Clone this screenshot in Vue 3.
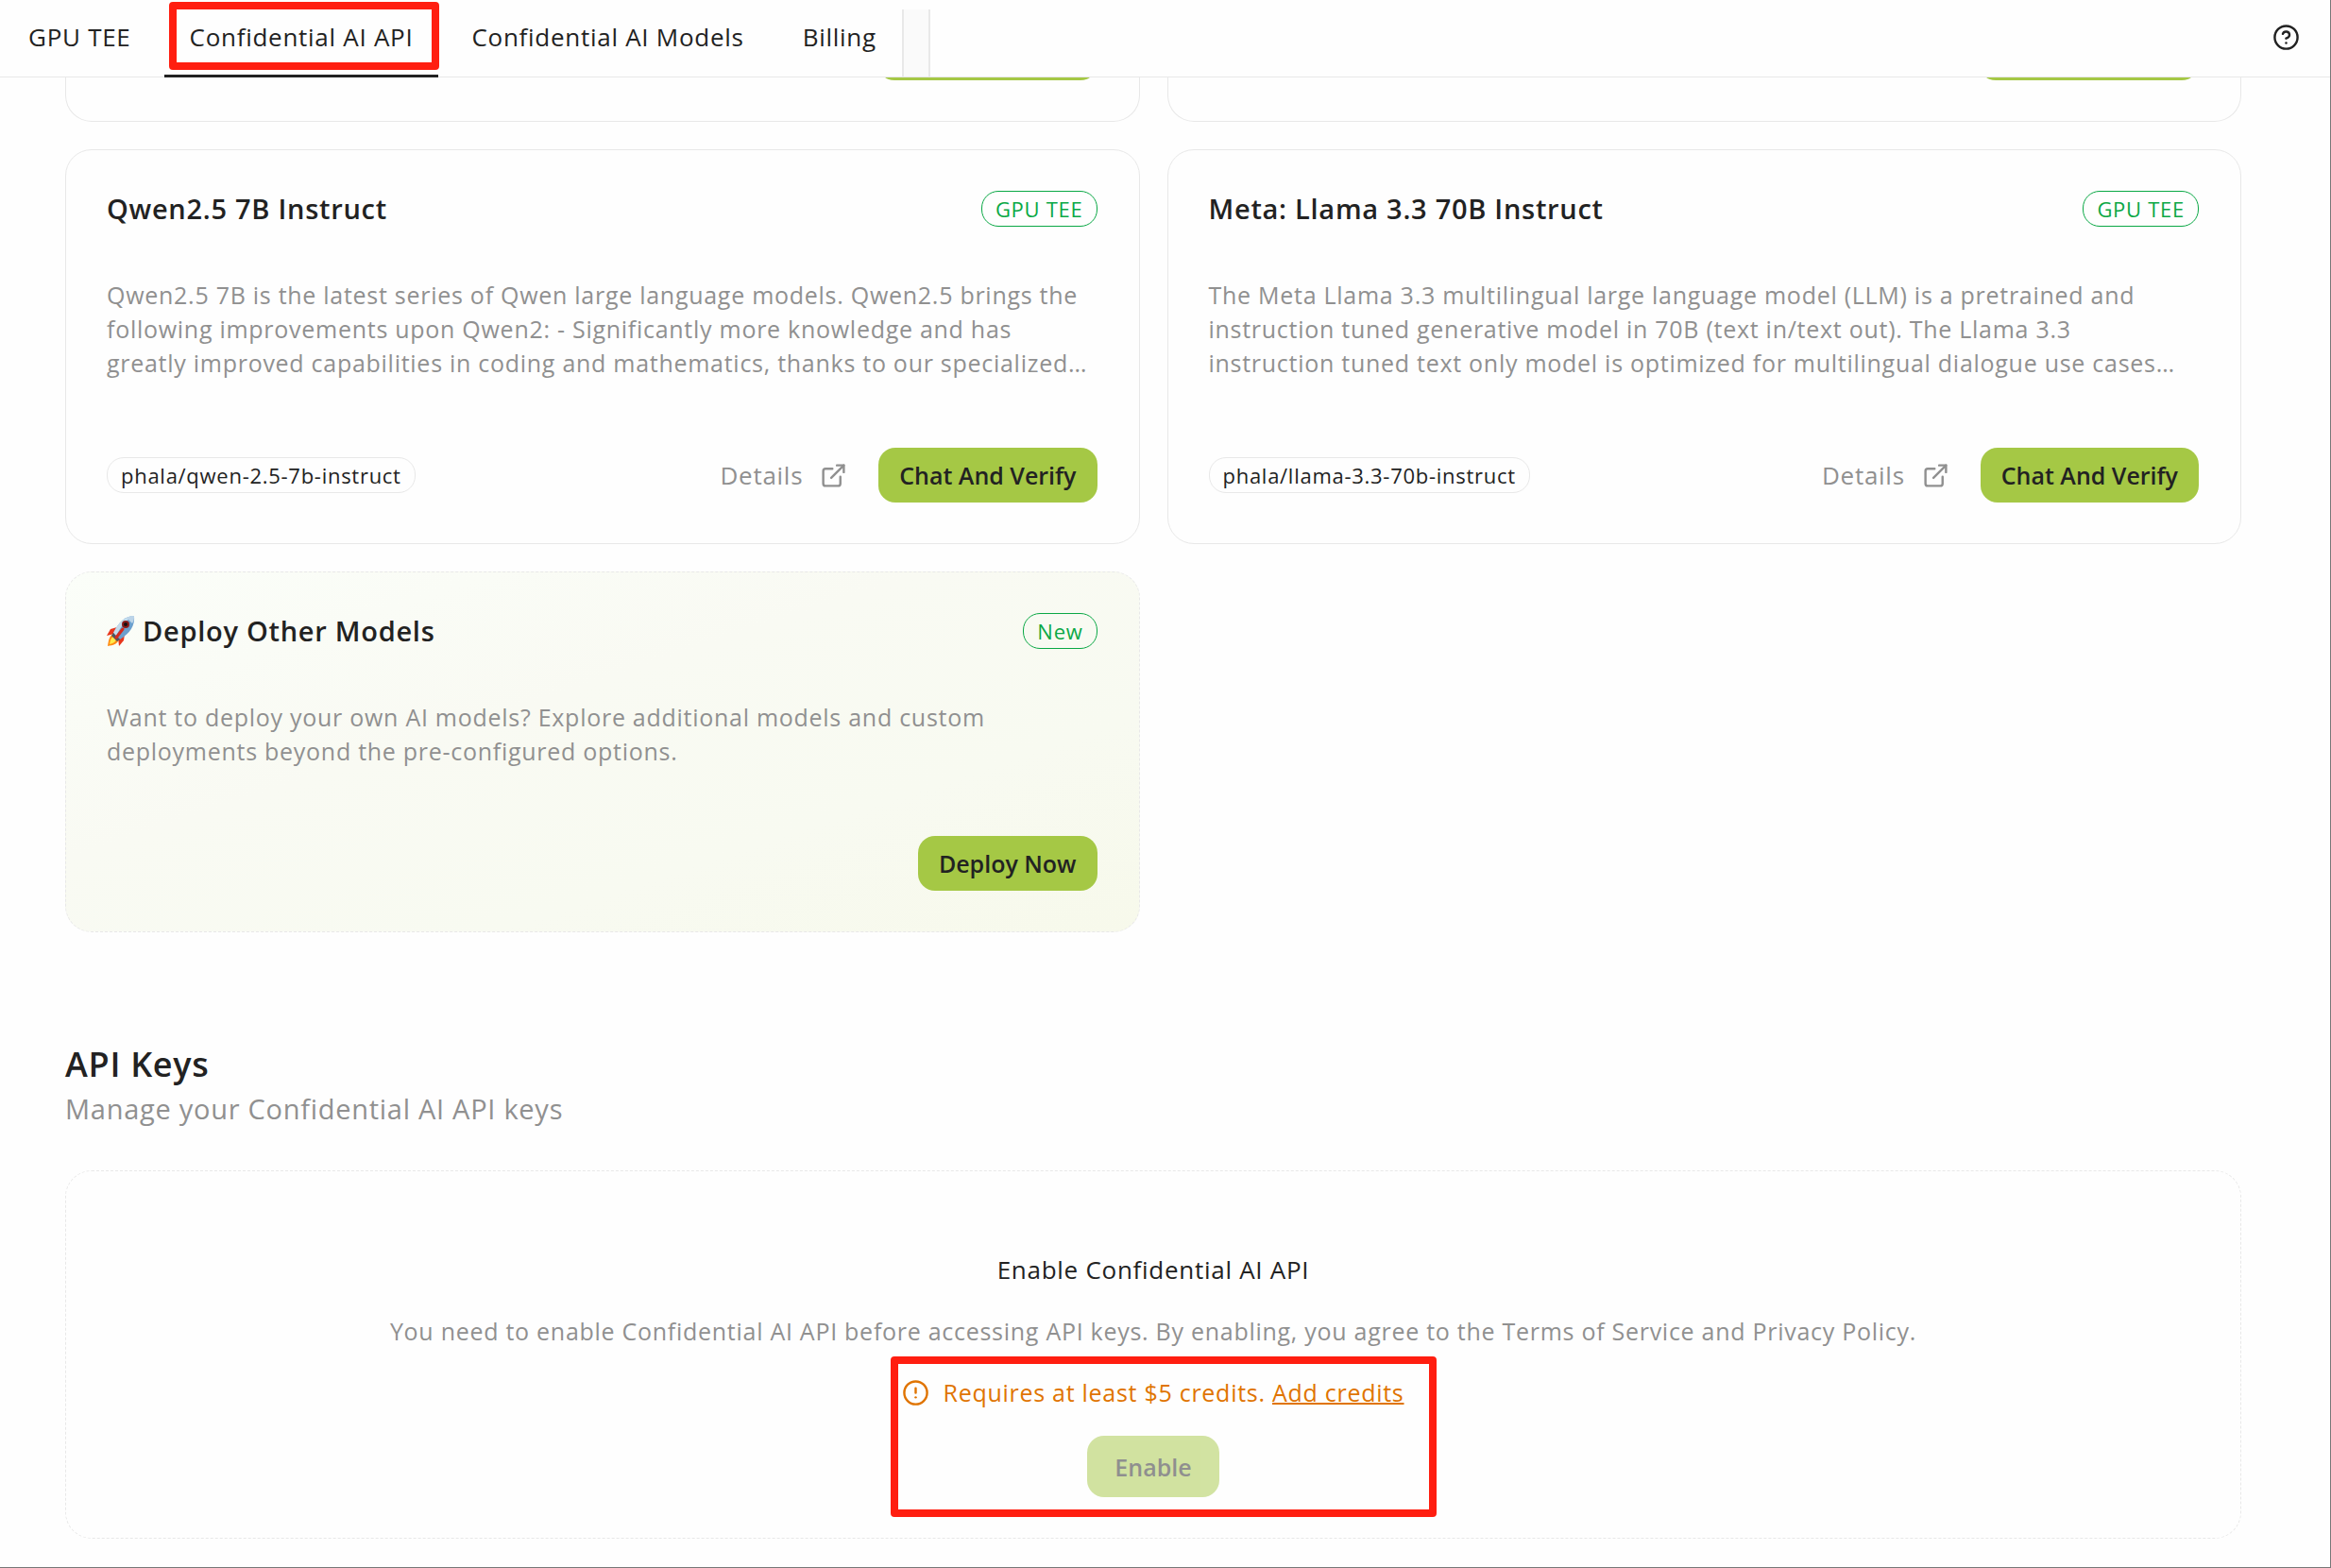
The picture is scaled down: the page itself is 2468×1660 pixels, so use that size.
<script setup>
const tabs = [
  { label: 'GPU TEE' },
  { label: 'Confidential AI API', active: true },
  { label: 'Confidential AI Models' },
  { label: 'Billing' },
]

const models = [
  {
    name: 'Qwen2.5 7B Instruct',
    badge: 'GPU TEE',
    slug: 'phala/qwen-2.5-7b-instruct',
    text: 'Qwen2.5 7B is the latest series of Qwen large language models. Qwen2.5 brings the following improvements upon Qwen2: - Significantly more knowledge and has greatly improved capabilities in coding and mathematics, thanks to our specialized…',
  },
  {
    name: 'Meta: Llama 3.3 70B Instruct',
    badge: 'GPU TEE',
    slug: 'phala/llama-3.3-70b-instruct',
    text: 'The Meta Llama 3.3 multilingual large language model (LLM) is a pretrained and instruction tuned generative model in 70B (text in/text out). The Llama 3.3 instruction tuned text only model is optimized for multilingual dialogue use cases…',
  },
]
</script>

<template>
  <div class="page">
    <header class="topbar">
      <nav class="tabs">
        <a v-for="tab in tabs" :key="tab.label" href="#" class="tab" :class="{ active: tab.active }">
          {{ tab.label }}
          <span v-if="tab.active" class="marker tab-marker"></span>
        </a>
      </nav>
      <div class="slot"></div>
      <button class="help" type="button" aria-label="Help">
        <svg viewBox="0 0 24 24" class="icon">
          <circle cx="12" cy="12" r="10" />
          <path d="M9.09 9a3 3 0 0 1 5.83 1c0 2-3 3-3 3" />
          <path d="M12 17h.01" />
        </svg>
      </button>
    </header>

    <main class="content">
      <section class="grid">
        <div v-for="n in 2" :key="n" class="card card-tail">
          <span class="button-tail"></span>
        </div>

        <article v-for="model in models" :key="model.slug" class="card">
          <div class="card-head">
            <h3>{{ model.name }}</h3>
            <span class="pill badge">{{ model.badge }}</span>
          </div>
          <p class="description">{{ model.text }}</p>
          <div class="card-foot">
            <span class="pill slug">{{ model.slug }}</span>
            <a href="#" class="details">
              Details
              <svg viewBox="0 0 24 24" class="icon">
                <path d="M15 3h6v6" />
                <path d="M10 14 21 3" />
                <path d="M18 13v6a2 2 0 0 1-2 2H5a2 2 0 0 1-2-2V8a2 2 0 0 1 2-2h6" />
              </svg>
            </a>
            <button type="button" class="button">Chat And Verify</button>
          </div>
        </article>

        <article class="card deploy">
          <div class="card-head">
            <h3>
              <svg viewBox="0 0 30 34" class="rocket" aria-hidden="true">
                <path d="M11 13 4 15 0 22l8-2z" fill="#e8361c" />
                <path d="m19 20-1 7-5 6-1-9z" fill="#e8361c" />
                <path d="M7 20c-4 2-5 6-6 13 6-1 10-2 12-7z" fill="#ff8a12" />
                <path d="M7 23c-3 2-3 4-4 8 4-1 6-2 7-5z" fill="#ffe94a" />
                <path d="M29 1C20 1 13 7 7 19l7 7C25 19 30 11 29 1z" fill="#6b9fcd" />
                <path d="M29 1C20 1 13 7 7 19l3 3C15 12 21 5 29 1z" fill="#c5dcec" />
                <path d="m7 19-2 3 6 6 3-2z" fill="#4b5560" />
                <path d="M29 1c-3 0-6 1-8 2l6 6c2-3 2-5 2-8z" fill="#bcd4e8" />
                <circle cx="20" cy="10" r="4" fill="#8b1a1a" />
                <circle cx="20" cy="10" r="2" fill="#160d12" />
                <path d="m17 15-7 9" stroke="#d52a1e" stroke-width="3" stroke-linecap="round" />
              </svg>
              Deploy Other Models
            </h3>
            <span class="pill badge">New</span>
          </div>
          <p class="description">
            Want to deploy your own AI models? Explore additional models and custom deployments beyond the
            pre-configured options.
          </p>
          <div class="card-foot end">
            <button type="button" class="button">Deploy Now</button>
          </div>
        </article>
      </section>

      <section class="keys">
        <h2>API Keys</h2>
        <p class="subtitle">Manage your Confidential AI API keys</p>
        <div class="enable-card">
          <h4>Enable Confidential AI API</h4>
          <p class="note">
            You need to enable Confidential AI API before accessing API keys. By enabling, you agree to the Terms
            of Service and Privacy Policy.
          </p>
          <div class="requirement">
            <p class="warning">
              <svg viewBox="0 0 24 24" class="icon">
                <circle cx="12" cy="12" r="10" />
                <path d="M12 8v4" />
                <path d="M12 16h.01" />
              </svg>
              <span>Requires at least $5 credits. <a href="#">Add credits</a></span>
            </p>
            <button type="button" class="button enable" disabled>Enable</button>
            <span class="marker requirement-marker"></span>
          </div>
        </div>
      </section>
    </main>
  </div>
</template>

<style>
body {
  background: #fefefe;
}
</style>

<style scoped>
.page {
  box-sizing: border-box;
  min-height: 100vh;
  border-right: 1px solid #777;
  border-bottom: 1px solid #777;
  font-family: "Open Sans", "Noto Sans", sans-serif;
  font-size: 29px;
  line-height: 36px;
  letter-spacing: 0.025em;
  color: #222;
}
.page * {
  box-sizing: border-box;
}
h2,
h3,
h4,
p {
  margin: 0;
}
button {
  border: 0;
  font: inherit;
  color: inherit;
}
.icon {
  flex: none;
  width: 29px;
  height: 29px;
  fill: none;
  stroke: currentColor;
  stroke-width: 2;
  stroke-linecap: round;
  stroke-linejoin: round;
}

.topbar {
  display: flex;
  align-items: stretch;
  height: 82px;
  padding: 0 32px 0 3px;
  border-bottom: 1px solid #e8e8e8;
}
.tabs {
  display: flex;
  gap: 8px;
}
.tab {
  position: relative;
  padding: 21px 27px 0;
  font-size: 26px;
  font-weight: 500;
  color: inherit;
  text-decoration: none;
  white-space: nowrap;
}
.tab.active {
  height: 82px;
  border-bottom: 3px solid #222;
}
.marker {
  position: absolute;
  border: 8px solid #ff1e10;
  border-radius: 4px;
  pointer-events: none;
}
.tab-marker {
  inset: 2px -1px 5px 5px;
}
.slot {
  width: 30px;
  margin-top: 10px;
  border: solid #e8e8e8;
  border-width: 0 2px;
  background: #fafafa;
}
.help {
  display: flex;
  align-items: center;
  margin-left: auto;
  padding: 0 0 2px;
  background: none;
}

.content {
  padding: 0 94px 30px 69px;
}
.grid {
  display: grid;
  grid-template-columns: 1fr 1fr;
  gap: 29px;
}
.card {
  padding: 43px 44px 43px 43px;
  border: 1px solid #e8e8e8;
  border-radius: 28px;
}
.card-tail {
  display: flex;
  align-items: flex-end;
  justify-content: flex-end;
  height: 47px;
  border-top: 0;
  border-radius: 0 0 28px 28px;
  padding-top: 0;
  overflow: hidden;
}
.button-tail {
  flex: none;
  width: 233px;
  height: 58px;
  border-radius: 18px;
  background: #a5c845;
}
.card-head {
  display: flex;
  align-items: center;
  justify-content: space-between;
  height: 38px;
}
h3 {
  display: flex;
  align-items: center;
  gap: 8px;
  font-size: 29px;
  font-weight: 600;
}
.pill {
  padding: 0 14px;
  border: 1px solid #e8e8e8;
  border-radius: 18px;
  font-size: 22px;
  font-weight: 500;
  white-space: nowrap;
}
.badge {
  border-color: #0aa845;
  color: #0aa845;
}
.description {
  margin: 54px 0 72px;
  font-size: 25px;
  color: #909090;
}
.card-foot {
  display: flex;
  align-items: center;
}
.card-foot.end {
  justify-content: flex-end;
}
.details {
  display: flex;
  align-items: center;
  gap: 18px;
  margin: 0 33px 0 auto;
  font-size: 26px;
  font-weight: 500;
  color: #909090;
  text-decoration: none;
}
.button {
  height: 58px;
  padding: 0 22px;
  border-radius: 18px;
  background: #a5c845;
  font-size: 25px;
  font-weight: 600;
  letter-spacing: normal;
}
.deploy {
  border-style: dashed;
  background: linear-gradient(to bottom right, #fbfef9, #f9faf3 40%, #f8faf1 70%, #f7f9eb);
}
.rocket {
  width: 30px;
  height: 34px;
}

.keys {
  margin-top: 115px;
}
h2 {
  font-size: 36px;
  font-weight: 600;
  line-height: 50px;
}
.subtitle {
  font-size: 29px;
  line-height: 44px;
  color: #909090;
}
.enable-card {
  display: flex;
  flex-direction: column;
  align-items: center;
  margin-top: 43px;
  padding: 86px 43px 43px;
  border: 1px dashed #e8e8e8;
  border-radius: 28px;
  font-size: 25px;
  text-align: center;
}
h4 {
  font-size: 26px;
  font-weight: 500;
}
.note {
  margin-top: 29px;
  color: #909090;
}
.requirement {
  position: relative;
  display: flex;
  flex-direction: column;
  align-items: center;
  gap: 28px;
  margin-top: 29px;
}
.warning {
  display: flex;
  align-items: center;
  gap: 14px;
  color: #e07400;
}
.warning a {
  color: inherit;
  text-decoration-thickness: 2px;
}
.enable {
  height: 65px;
  padding: 0 29px;
  opacity: 0.5;
}
.requirement-marker {
  inset: -20px -34px -21px -12px;
}
</style>
